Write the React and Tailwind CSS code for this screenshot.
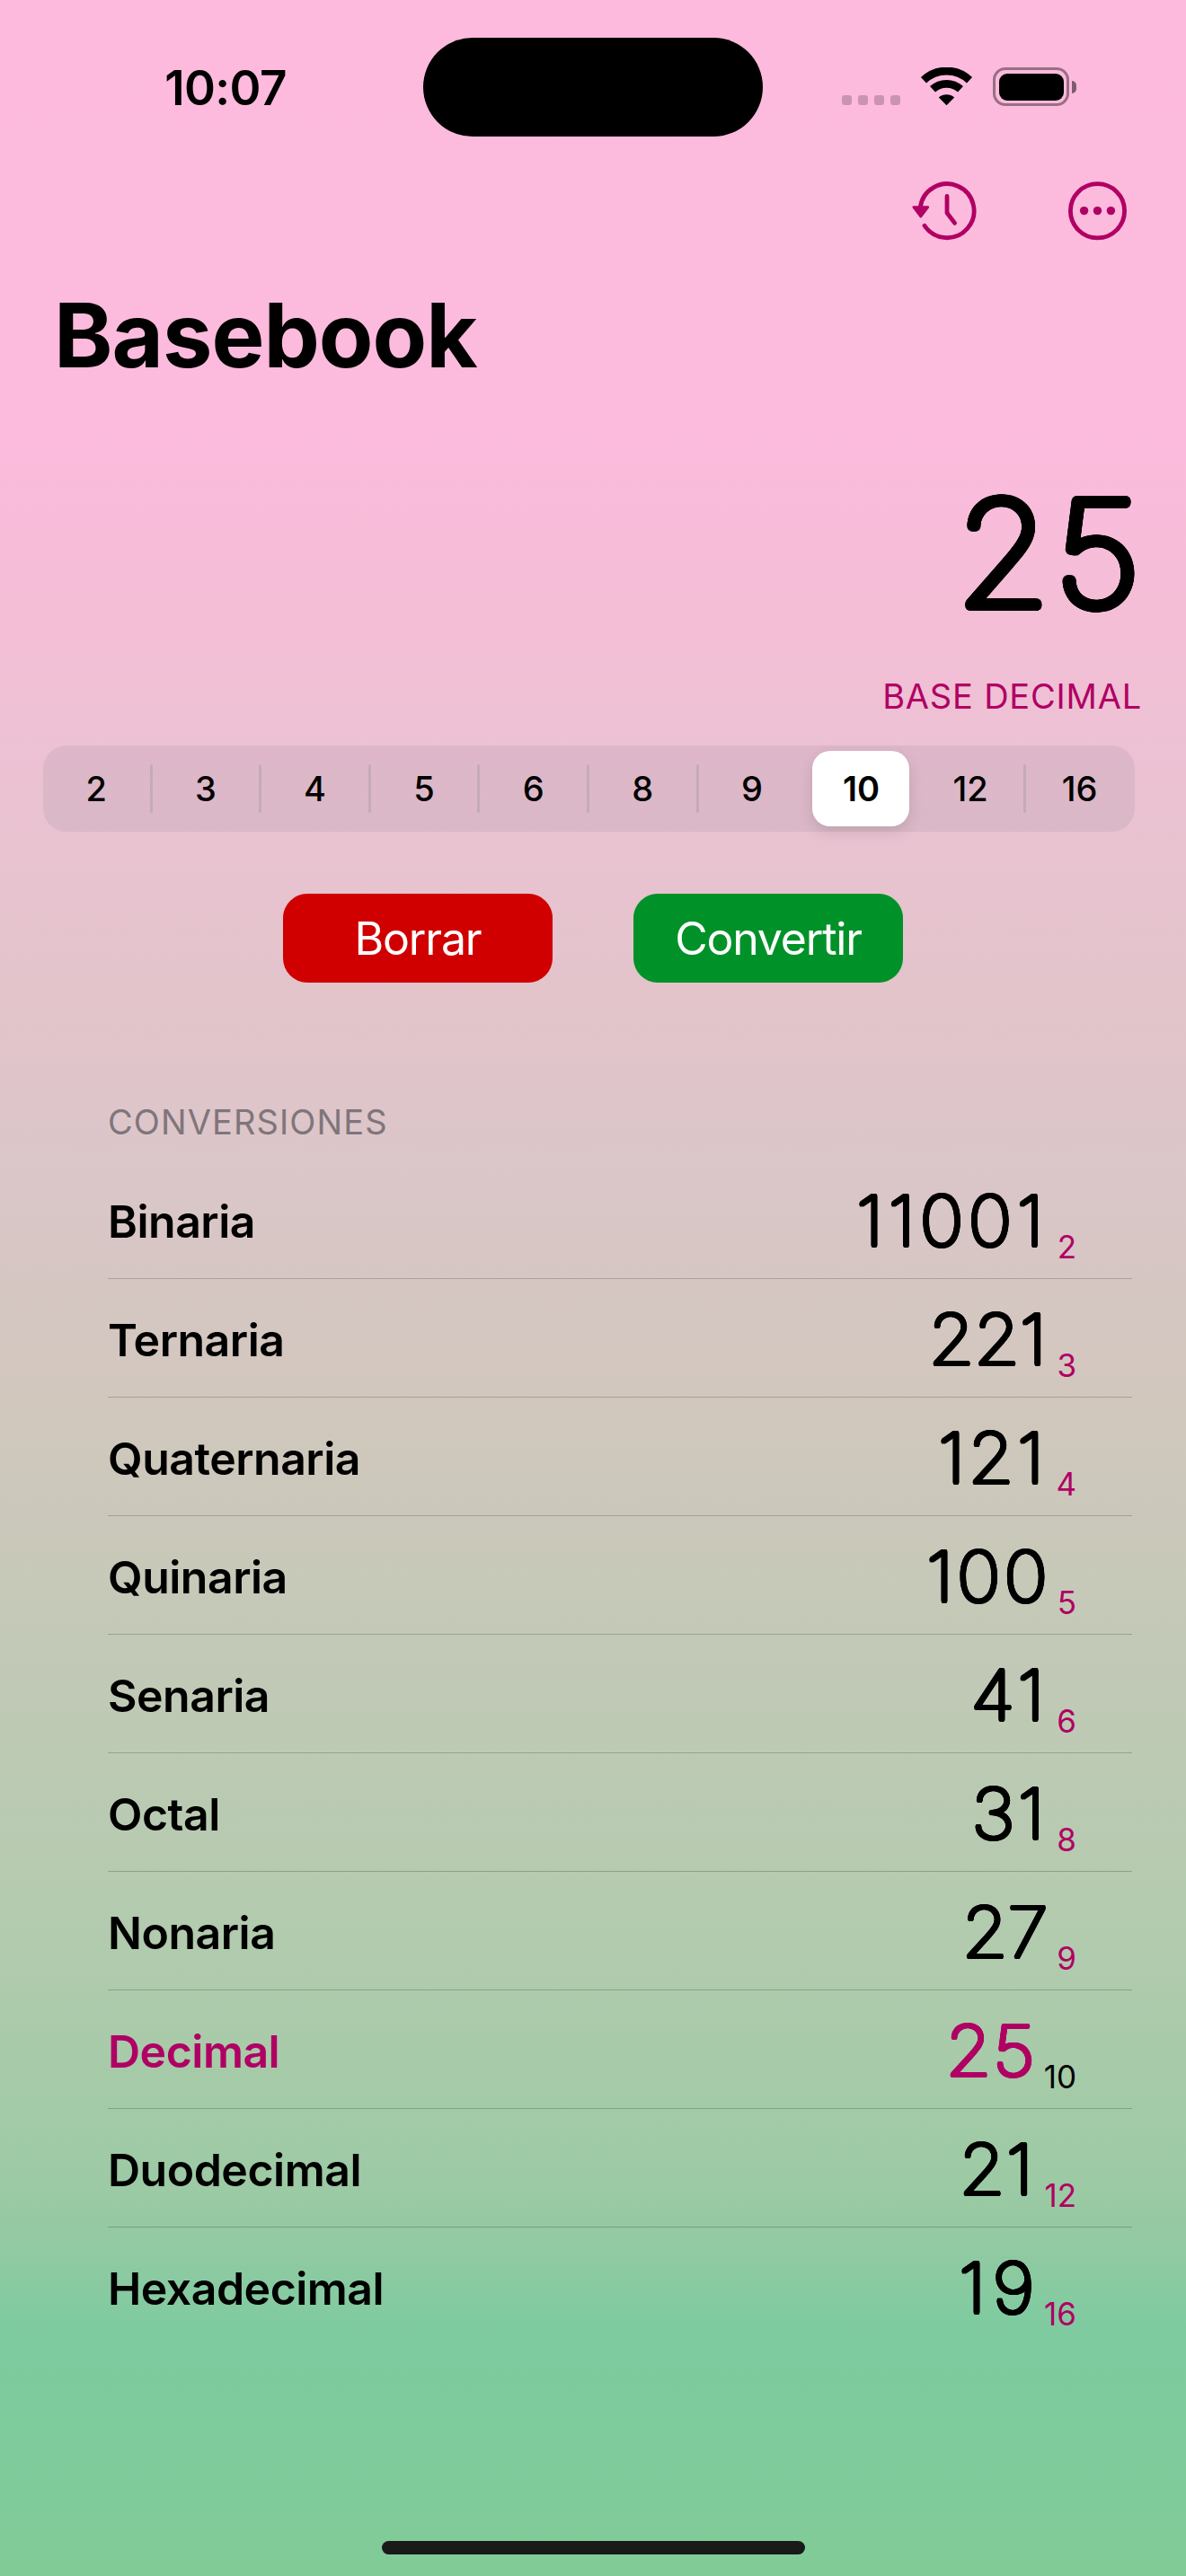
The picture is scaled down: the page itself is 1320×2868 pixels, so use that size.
const bases = ["2", "3", "4", "5", "6", "8", "9", "10", "12", "16"];
const selectedBase = "10";

const rows = [
  { name: "Binaria", value: "11001", base: "2", fit: "mr-[1px] tracking-[4.8px]" },
  { name: "Ternaria", value: "221", base: "3", fit: "mr-[3px] tracking-[-0.5px]" },
  { name: "Quaternaria", value: "121", base: "4", fit: "mr-[1px] tracking-[3px]" },
  { name: "Quinaria", value: "100", base: "5", fit: "-mr-[2px] tracking-[3.5px]" },
  { name: "Senaria", value: "41", base: "6", fit: "mr-[1px] tracking-[3.5px]" },
  { name: "Octal", value: "31", base: "8", fit: "mr-[1px] tracking-[3px]" },
  { name: "Nonaria", value: "27", base: "9", fit: "mr-[1px] tracking-[-0.5px]" },
  { name: "Decimal", value: "25", base: "10", fit: "-mr-[1px] tracking-[1.5px]" },
  { name: "Duodecimal", value: "21", base: "12", fit: "mr-[2px] tracking-[1px]" },
  { name: "Hexadecimal", value: "19", base: "16", fit: "-mr-[6px] tracking-[7px]" },
];

// A ring of hard shadows thickens a thin face evenly and rounds its stroke ends.
function roundedStroke(radius, steps) {
  return Array.from({ length: steps }, (_, i) => {
    const a = (i / steps) * Math.PI * 2;
    return `${(Math.cos(a) * radius).toFixed(2)}px ${(Math.sin(a) * radius).toFixed(2)}px 0 currentColor`;
  }).join(", ");
}

const displayStroke = roundedStroke(5.4, 32) + ", " + roundedStroke(2.6, 12);
const rowStroke = roundedStroke(2.3, 16);

function StatusBar() {
  return (
    <header className="grid h-[194px] grid-cols-[471px_378px_471px] items-center">
      <div className="pl-[31px] pt-[3px] text-center text-[53px] font-semibold leading-none tracking-[-0.6px]">10:07</div>
      <div className="h-[110px] rounded-full bg-black" />
      <div className="flex items-center pb-px pl-[88px]">
        <div className="mt-[30px] flex gap-[7px]">
          {[0, 1, 2, 3].map((i) => (
            <span key={i} className="size-[11px] rounded-[3px] bg-black/20" />
          ))}
        </div>
        <svg className="ml-[22px] h-[43px] w-[59px]" viewBox="0 0 59 43" fill="none">
          <path d="M4 14.2A37 37 0 0 1 55 14.2" stroke="#000" strokeWidth="8.8" />
          <path d="M14 24.3A23 23 0 0 1 45 24.3" stroke="#000" strokeWidth="8.8" />
          <path d="M29.5 42.2 L20.8 33.4A13.5 13.5 0 0 1 38.2 33.4Z" fill="#000" />
        </svg>
        <div className="ml-[22px] h-[43px] w-[85px] rounded-[14px] border-[3.5px] border-black/40 p-[3.5px]">
          <div className="h-full w-full rounded-[9px] bg-black" />
        </div>
        <div className="ml-[3px] h-[14px] w-[5px] rounded-r-full bg-black/50" />
      </div>
    </header>
  );
}

function Toolbar() {
  return (
    <nav className="flex h-[82px] items-center justify-end gap-[100px] pr-[64px] text-[#b00064]">
      <svg className="h-[68px] w-[76px]" viewBox="0 0 76 68" fill="none" stroke="currentColor" strokeWidth="4.8" strokeLinecap="round" strokeLinejoin="round">
        <path d="M12.3 30A30 30 0 1 1 17 50.2" />
        <path d="M42 17.5V36L50.6 47.4" />
        <path d="M4.8 29.6H20.8L12.8 40.2Z" fill="currentColor" strokeWidth="2.6" />
      </svg>
      <svg className="size-[68px]" viewBox="0 0 68 68" fill="none">
        <circle cx="33.5" cy="33.8" r="30.1" stroke="currentColor" strokeWidth="4.8" />
        <circle cx="18.6" cy="33.6" r="4.7" fill="currentColor" />
        <circle cx="33.5" cy="33.6" r="4.7" fill="currentColor" />
        <circle cx="48.4" cy="33.6" r="4.7" fill="currentColor" />
      </svg>
    </nav>
  );
}

function BasePicker() {
  return (
    <div className="ml-[48px] mr-[57px] mt-[39px] flex h-[96px] items-center rounded-[26px] bg-[#767680]/12 pr-[2px] text-[38px] leading-none">
      {bases.map((b, i) => {
        const on = b === selectedBase;
        const hidden = on || bases[i - 1] === selectedBase;
        return (
          <div key={b} className="contents">
            {i > 0 && <span className={hidden ? "w-[3px]" : "h-[54px] w-[3px] rounded-full bg-[#8e8e93]/30"} />}
            <div className="flex flex-1 justify-center">
              {on ? (
                <span className="flex h-[84px] w-[108px] shrink-0 items-center justify-center rounded-[20px] bg-white font-semibold shadow-[0_6px_16px_rgba(0,0,0,0.12)]">
                  {b}
                </span>
              ) : (
                <span className="font-[450]">{b}</span>
              )}
            </div>
          </div>
        );
      })}
    </div>
  );
}

function Row({ name, value, base, fit, last }) {
  const on = base === selectedBase;
  return (
    <li className={"ml-[120px] mr-[60px] flex h-[132px] justify-between pr-[62px] " + (last ? "" : "border-b border-black/20")}>
      <span className={"text-[50px] font-semibold leading-[136px] tracking-[-0.5px] " + (on ? "text-[#b00064]" : "")}>{name}</span>
      <span className="flex items-start">
        <span
          className={"origin-right scale-x-107 text-[77px] font-thin leading-[135px] " + fit + (on ? " text-[#b00064]" : "")}
          style={{ textShadow: rowStroke }}
        >
          {value}
        </span>
        <span className={"ml-[9px] mt-[77px] text-[35px] leading-[39px] " + (on ? "" : "text-[#b00064]")}>{base}</span>
      </span>
    </li>
  );
}

export default function App() {
  return (
    <div className="flex h-[2868px] w-[1320px] flex-col overflow-hidden bg-[linear-gradient(180deg,#fdbadd_0px,#fcbbdd_480px,#f4bed6_690px,#edc1d4_820px,#e3c4cb_1100px,#dac6c8_1320px,#d1c7bd_1560px,#c3c9b7_1830px,#b0cbad_2190px,#9ccaa4_2430px,#94c9a3_2490px,#7dcb9f_2600px,#81cb97_2868px)] font-['Inter',sans-serif] text-black">
      <StatusBar />
      <Toolbar />
      <h1 className="pl-[60px] text-[99px] font-bold leading-[194px] tracking-[-1px]">Basebook</h1>
      <div
        className="origin-right scale-x-104 pr-[44px] text-right text-[162px] font-thin leading-[292px] tracking-[5px]"
        style={{ textShadow: displayStroke }}
      >
        25
      </div>
      <div className="-mt-[2px] pr-[49px] text-right text-[38px] leading-[31px] tracking-[0.8px] text-[#b00064]">BASE DECIMAL</div>
      <BasePicker />
      <div className="mt-[69px] flex justify-center gap-[90px] text-[50px] tracking-[-1.2px] text-white">
        <button className="h-[99px] w-[300px] rounded-[27px] bg-[#d00000] pt-px">Borrar</button>
        <button className="h-[99px] w-[300px] rounded-[27px] bg-[#009229] pt-px">Convertir</button>
      </div>
      <h2 className="mt-[131px] pl-[120px] text-[38px] leading-[48px] tracking-[1.1px] text-[#7f757b]">CONVERSIONES</h2>
      <ul className="mt-[19px]">
        {rows.map((r, i) => (
          <Row key={r.base} {...r} last={i === rows.length - 1} />
        ))}
      </ul>
      <div className="mb-[24px] mt-auto h-[15px] w-[471px] self-center rounded-full bg-[#1a1a1a]" />
    </div>
  );
}
